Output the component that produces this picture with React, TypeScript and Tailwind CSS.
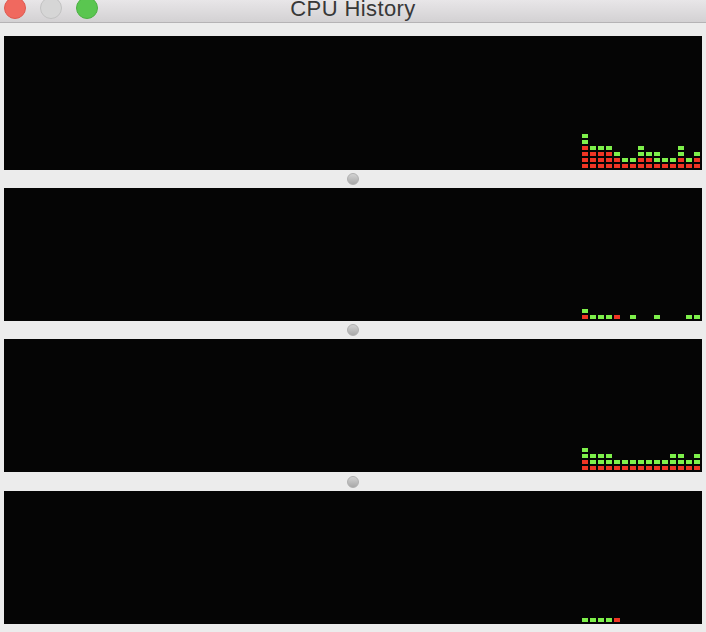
import React from "react";

type Col = [number, number]; // [red, green]

const panels: { h: string; cols: Col[] }[] = [
  {
    h: "h-[134px]",
    cols: [
      [4, 2], [3, 1], [3, 1], [3, 1], [2, 1], [1, 1], [1, 1], [2, 2],
      [2, 1], [1, 2], [1, 1], [1, 1], [2, 2], [1, 1], [2, 1],
    ],
  },
  {
    h: "h-[133px]",
    cols: [
      [1, 1], [0, 1], [0, 1], [0, 1], [1, 0], [0, 0], [0, 1], [0, 0],
      [0, 0], [0, 1], [0, 0], [0, 0], [0, 0], [0, 1], [0, 1],
    ],
  },
  {
    h: "h-[133px]",
    cols: [
      [2, 2], [1, 2], [1, 2], [1, 2], [1, 1], [1, 1], [1, 1], [1, 1],
      [1, 1], [1, 1], [1, 1], [1, 2], [1, 2], [1, 1], [1, 2],
    ],
  },
  {
    h: "h-[133px]",
    cols: [
      [0, 1], [0, 1], [0, 1], [0, 1], [1, 0], [0, 0], [0, 0], [0, 0],
      [0, 0], [0, 0], [0, 0], [0, 0], [0, 0], [0, 0], [0, 0],
    ],
  },
];

function Panel({ h, cols }: { h: string; cols: Col[] }) {
  return (
    <div className={`${h} w-full bg-[#050505] flex items-end justify-end pr-[2px] pb-[2px] gap-[2px]`}>
      {cols.map(([r, g], i) => (
        <div key={i} className="w-[6px] flex flex-col justify-end gap-[2px]">
          {Array.from({ length: g }).map((_, k) => (
            <div key={"g" + k} className="w-[6px] h-[4px] bg-[#7ef04b]" />
          ))}
          {Array.from({ length: r }).map((_, k) => (
            <div key={"r" + k} className="w-[6px] h-[4px] bg-[#ef3524]" />
          ))}
        </div>
      ))}
    </div>
  );
}

function Divider({ h }: { h: string }) {
  return (
    <div className={`${h} w-full flex items-center justify-center`}>
      <div className="w-[12px] h-[12px] rounded-full bg-gradient-to-b from-[#d2d2d2] to-[#a9a9a9] border border-[#b0b0b0]" />
    </div>
  );
}

export default function App() {
  return (
    <div
      className="w-[706px] h-[632px] bg-[#ececec] flex flex-col overflow-hidden"
      style={{ fontFamily: '"Liberation Sans", Arial, sans-serif' }}
    >
      <div className="relative h-[23px] shrink-0 bg-gradient-to-b from-[#e8e6e8] to-[#d3d1d3] border-b border-[#b5b3b5] flex justify-center items-start overflow-hidden">
        <div className="absolute left-[4px] top-[-3px] flex gap-[14px]">
          <div className="w-[22px] h-[22px] rounded-full bg-[#f0695f] border border-[#de5a51]" />
          <div className="w-[22px] h-[22px] rounded-full bg-[#d6d6d6] border border-[#c2c2c2]" />
          <div className="w-[22px] h-[22px] rounded-full bg-[#5ac650] border border-[#4cb043]" />
        </div>
        <div className="mt-[-2px] text-[22px] leading-[22px] tracking-[0.4px] text-[#383838]">CPU History</div>
      </div>
      <div className="flex flex-col px-[4px] pt-[13px]">
        <Panel {...panels[0]} />
        <Divider h="h-[18px]" />
        <Panel {...panels[1]} />
        <Divider h="h-[18px]" />
        <Panel {...panels[2]} />
        <Divider h="h-[19px]" />
        <Panel {...panels[3]} />
      </div>
    </div>
  );
}
